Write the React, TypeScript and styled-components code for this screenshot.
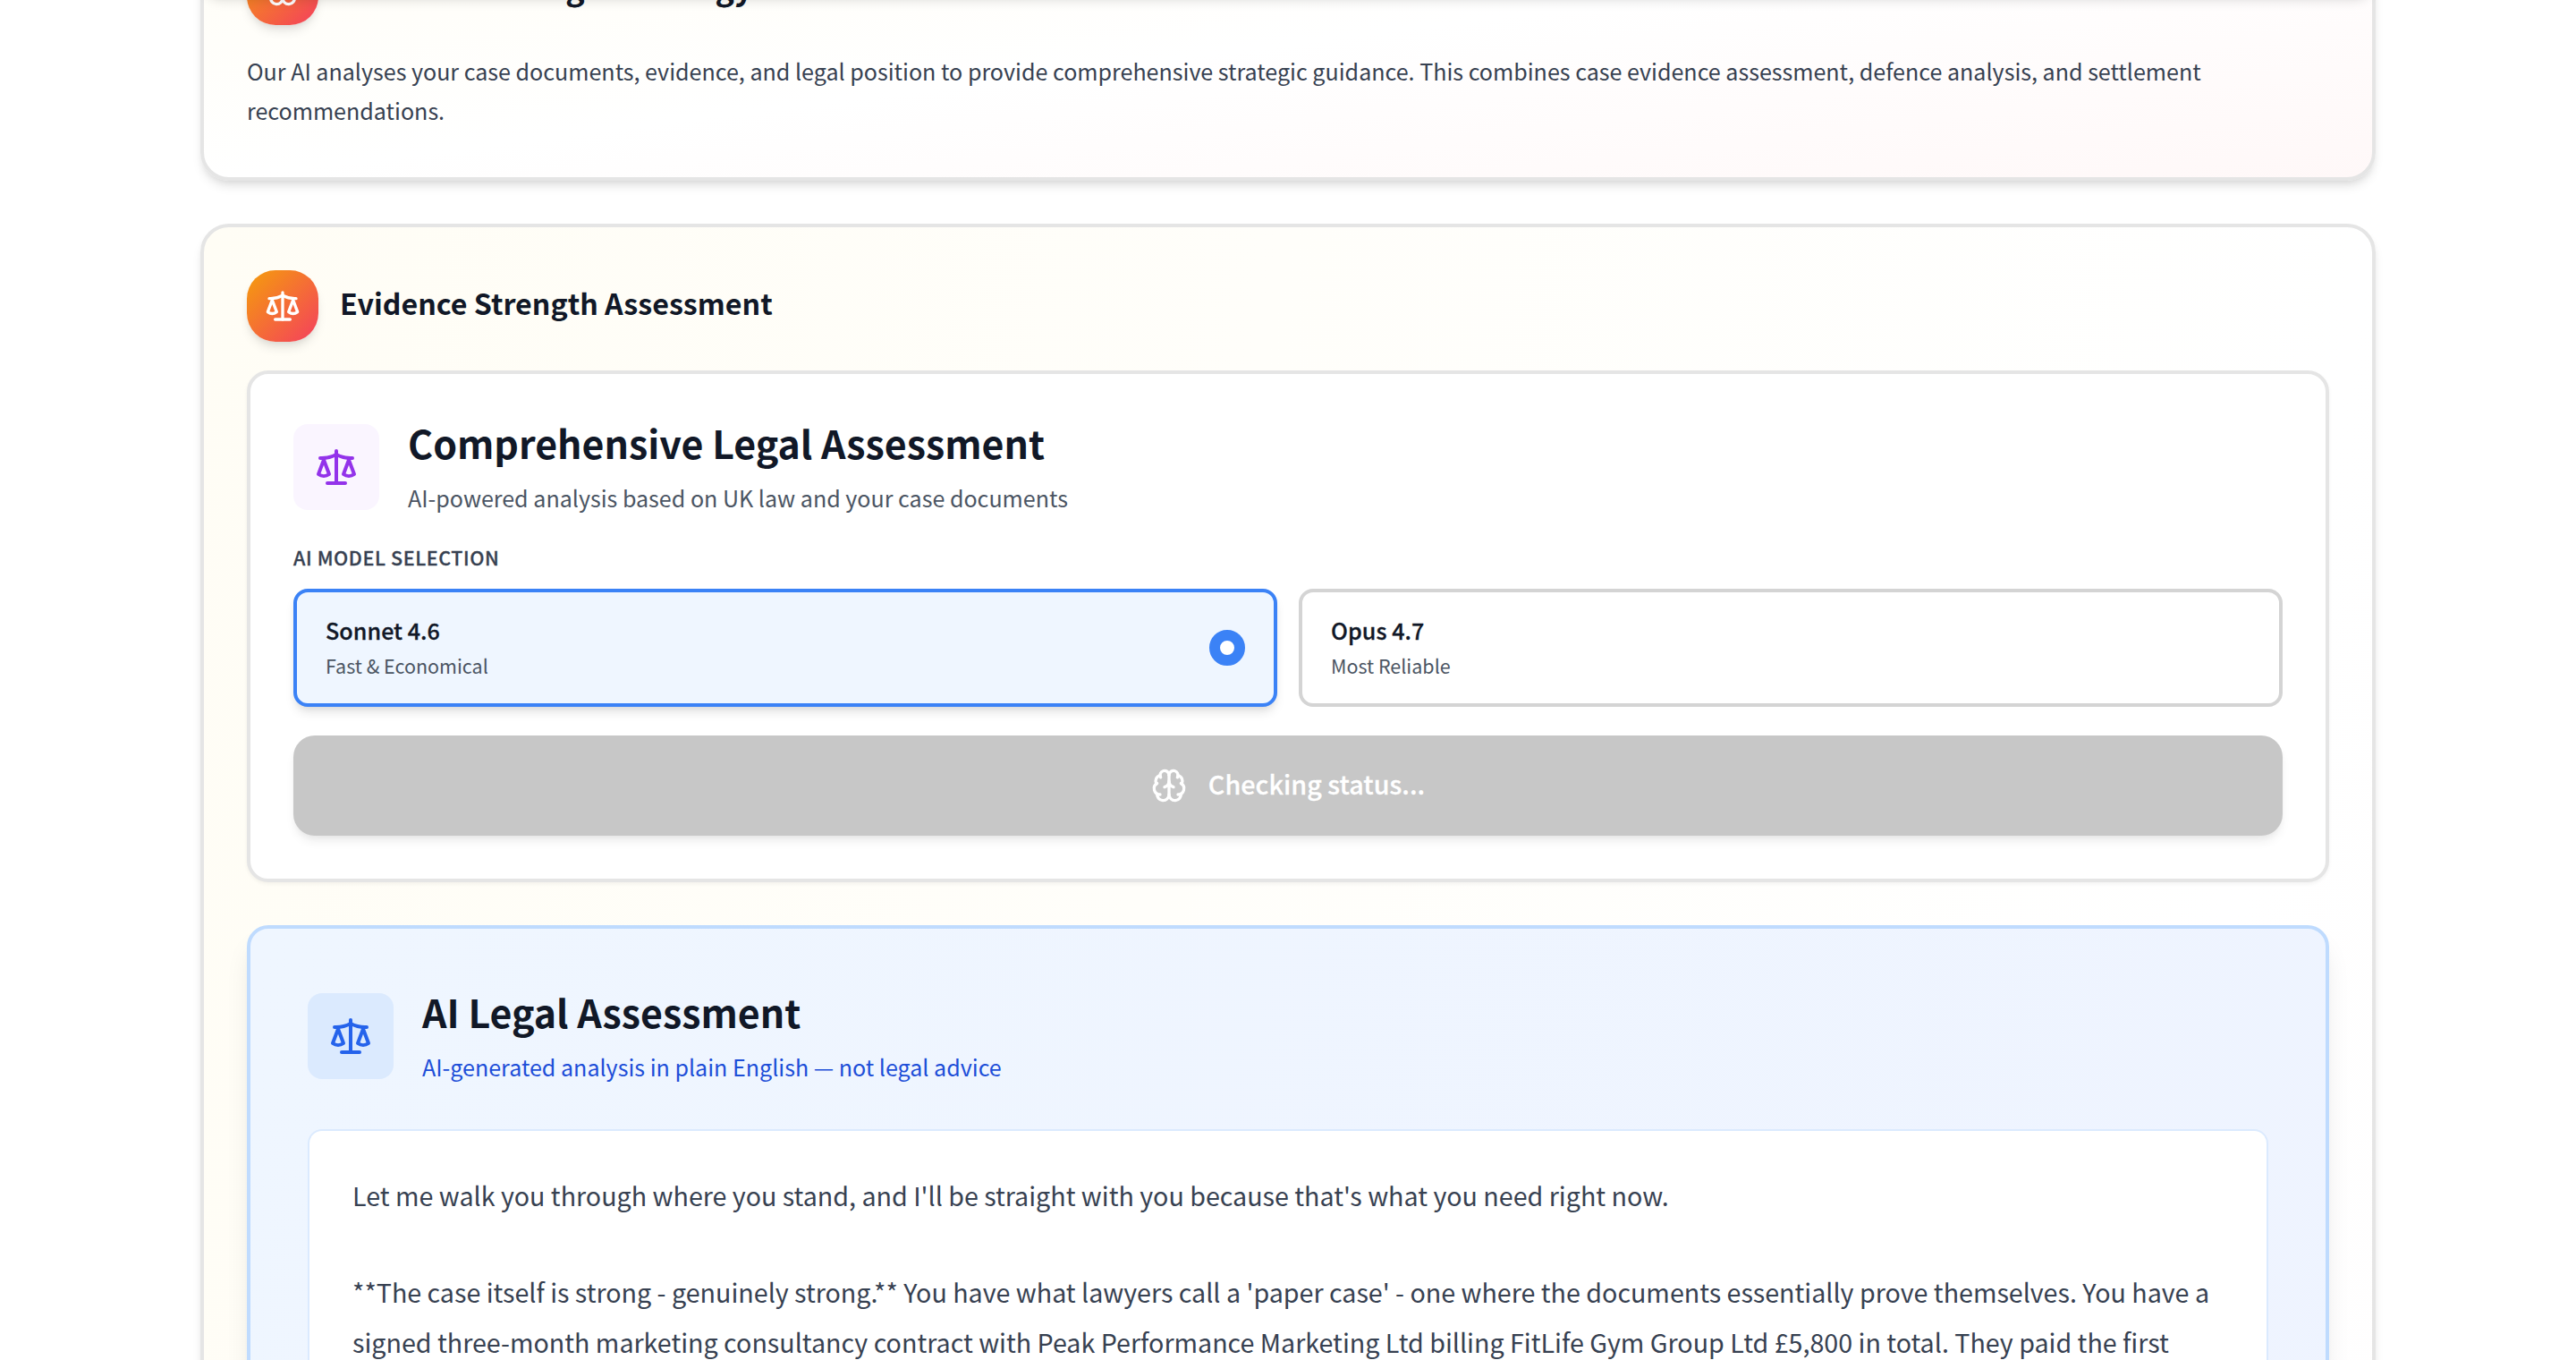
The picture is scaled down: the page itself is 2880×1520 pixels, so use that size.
import React from "react";
import styled, { createGlobalStyle } from "styled-components";
import { Brain, Scale } from "lucide-react";

const Global = createGlobalStyle`
  *, *::before, *::after { box-sizing: border-box; }
  body { margin: 0; background: #fff; font-family: "Noto Sans CJK SC", "Noto Sans", sans-serif; color: #111827; }
  #root { height: 1520px; overflow: hidden; }
  h2, h3, p { margin: 0; }
`;

const StickyBar = styled.header`
  position: fixed;
  top: -84px;
  left: 224px;
  right: 224px;
  height: 80px;
  border-radius: 24px;
  box-shadow: 0 8px 12px -2px rgba(0, 0, 0, 0.1), 0 4px 8px -4px rgba(0, 0, 0, 0.1);
`;

const Page = styled.main`
  width: 2432px;
  margin: -104px auto 0;
  display: flex;
  flex-direction: column;
  gap: 48px;
`;

const Section = styled.section<{ $tall?: boolean }>`
  border: 4px solid #e5e5e5;
  border-radius: 32px;
  padding: 48px 48px 53px;
  height: ${(p) => (p.$tall ? "12000px" : "auto")};
  background: linear-gradient(to bottom right, #fffdf5, #ffffff 50%, #fff8f8);
  background-origin: border-box;
  box-shadow: 0 8px 12px -2px rgba(0, 0, 0, 0.1), 0 4px 8px -4px rgba(0, 0, 0, 0.1);
`;

const SectionHead = styled.div<{ $gap: number }>`
  display: flex;
  align-items: center;
  gap: 24px;
  margin-bottom: ${(p) => p.$gap}px;
`;

const Badge = styled.div`
  width: 80px;
  height: 80px;
  border-radius: 32px;
  display: grid;
  place-items: center;
  color: #fff;
  background: linear-gradient(135deg, #f59e0b, #f43f5e);
  box-shadow: 0 8px 12px -2px rgba(0, 0, 0, 0.1), 0 4px 8px -4px rgba(0, 0, 0, 0.1);
`;

const SectionTitle = styled.h2<{ $size: number }>`
  font-size: ${(p) => p.$size}px;
  line-height: 56px;
  padding-bottom: 8px;
  font-weight: 700;
`;

const Intro = styled.p`
  font-size: 25.07px;
  line-height: 44px;
  color: #374151;
`;

const Panel = styled.div`
  border: 4px solid #e5e5e5;
  border-radius: 24px;
  padding: 48px;
  background: #fff;
  box-shadow: 0 2px 4px rgba(0, 0, 0, 0.05);
`;

const ReportPanel = styled(Panel)`
  margin-top: 48px;
  height: 5000px;
  padding: 64px;
  border-color: #bfdbfe;
  background: linear-gradient(to bottom right, #eff6ff, #eef2ff);
  box-shadow: 0 20px 30px -6px rgba(0, 0, 0, 0.1), 0 8px 12px -8px rgba(0, 0, 0, 0.1);
`;

const PanelHead = styled.div`
  display: flex;
  align-items: flex-start;
  gap: 32px;
`;

const IconTile = styled.div<{ $bg: string; $fg: string }>`
  width: 96px;
  height: 96px;
  margin-top: 8px;
  border-radius: 16px;
  display: grid;
  place-items: center;
  background: ${(p) => p.$bg};
  color: ${(p) => p.$fg};
`;

const PanelTitle = styled.h3`
  font-size: 42.9px;
  line-height: 56px;
  font-weight: 700;
`;

const PanelSub = styled.p<{ $color: string }>`
  margin-top: 12px;
  font-size: 25.07px;
  line-height: 44px;
  color: ${(p) => p.$color};
`;

const Label = styled.p`
  margin-top: 27px;
  font-size: 21.49px;
  line-height: 36px;
  font-weight: 500;
  letter-spacing: 0.6px;
  color: #374151;
  -webkit-text-stroke: 0.3px currentColor;
`;

const Models = styled.div`
  display: grid;
  grid-template-columns: 1fr 1fr;
  gap: 24px;
  margin-top: 17px;
`;

const Model = styled.div<{ $active?: boolean }>`
  display: flex;
  align-items: center;
  justify-content: space-between;
  height: 132px;
  padding: 0 32px;
  border: 4px solid ${(p) => (p.$active ? "#3b82f6" : "#d4d4d4")};
  border-radius: 16px;
  background: ${(p) => (p.$active ? "#eff6ff" : "#fff")};
  box-shadow: ${(p) =>
    p.$active ? "0 8px 12px -2px rgba(0, 0, 0, 0.1), 0 4px 8px -4px rgba(0, 0, 0, 0.1)" : "none"};
`;

const ModelText = styled.div`
  display: flex;
  flex-direction: column;
  gap: 2px;
  padding-bottom: 2px;
`;

const ModelName = styled.p`
  font-size: 25.07px;
  line-height: 40px;
  font-weight: 500;
  letter-spacing: 0.05px;
  -webkit-text-stroke: 0.3px currentColor;
`;

const ModelNote = styled.p`
  font-size: 21.49px;
  line-height: 36px;
  color: #4b5563;
`;

const Radio = styled.span`
  width: 40px;
  height: 40px;
  border-radius: 50%;
  border: 12px solid #3b82f6;
  background: #fff;
`;

const StatusButton = styled.button`
  display: flex;
  align-items: center;
  justify-content: center;
  gap: 24px;
  width: 100%;
  height: 112px;
  margin-top: 32px;
  padding: 0;
  border: 0;
  border-radius: 24px;
  background: #c7c7c7;
  color: #fff;
  font: 500 28.65px/48px "Noto Sans CJK SC", "Noto Sans", sans-serif;
  box-shadow: 0 8px 12px -2px rgba(0, 0, 0, 0.07), 0 4px 8px -4px rgba(0, 0, 0, 0.07);
`;

const ButtonText = styled.span`
  padding-bottom: 4px;
  letter-spacing: 0.07px;
  -webkit-text-stroke: 0.3px currentColor;
`;

const Report = styled.div`
  margin-top: 48px;
  height: 4700px;
  padding: 44px 48px;
  border: 2px solid #dbeafe;
  border-radius: 16px;
  background: #fff;
  font-size: 28.65px;
  line-height: 56px;
  color: #374151;
`;

const Paragraph = styled.p`
  & + & { margin-top: 52px; }
`;

export default function App() {
  return (
    <>
      <Global />
      <StickyBar />
      <Page>
        <Section>
          <SectionHead $gap={29}>
            <Badge><Brain size={40} /></Badge>
            <SectionTitle $size={35.8}>AI-Powered Legal Strategy</SectionTitle>
          </SectionHead>
          <Intro>
            Our AI analyses your case documents, evidence, and legal position to provide comprehensive strategic guidance. This combines case evidence assessment, defence analysis, and settlement recommendations.
          </Intro>
        </Section>
        <Section $tall>
          <SectionHead $gap={32}>
            <Badge><Scale size={40} /></Badge>
            <SectionTitle $size={32.2}>Evidence Strength Assessment</SectionTitle>
          </SectionHead>
          <Panel>
            <PanelHead>
              <IconTile $bg="#faf5ff" $fg="#9333ea"><Scale size={48} /></IconTile>
              <div>
                <PanelTitle>Comprehensive Legal Assessment</PanelTitle>
                <PanelSub $color="#4b5563">AI-powered analysis based on UK law and your case documents</PanelSub>
              </div>
            </PanelHead>
            <Label>AI MODEL SELECTION</Label>
            <Models>
              <Model $active>
                <ModelText>
                  <ModelName>Sonnet 4.6</ModelName>
                  <ModelNote>Fast &amp; Economical</ModelNote>
                </ModelText>
                <Radio />
              </Model>
              <Model>
                <ModelText>
                  <ModelName>Opus 4.7</ModelName>
                  <ModelNote>Most Reliable</ModelNote>
                </ModelText>
              </Model>
            </Models>
            <StatusButton><Brain size={40} /><ButtonText>Checking status...</ButtonText></StatusButton>
          </Panel>
          <ReportPanel>
            <PanelHead>
              <IconTile $bg="#dbeafe" $fg="#2563eb"><Scale size={48} /></IconTile>
              <div>
                <PanelTitle>AI Legal Assessment</PanelTitle>
                <PanelSub $color="#1d4ed8">AI-generated analysis in plain English — not legal advice</PanelSub>
              </div>
            </PanelHead>
            <Report>
              <Paragraph>Let me walk you through where you stand, and I'll be straight with you because that's what you need right now.</Paragraph>
              <Paragraph>
                **The case itself is strong - genuinely strong.** You have what lawyers call a 'paper case' - one where the documents essentially prove themselves. You have a signed three-month marketing consultancy contract with Peak Performance Marketing Ltd billing FitLife Gym Group Ltd £5,800 in total. They paid the first
              </Paragraph>
            </Report>
          </ReportPanel>
        </Section>
      </Page>
    </>
  );
}
